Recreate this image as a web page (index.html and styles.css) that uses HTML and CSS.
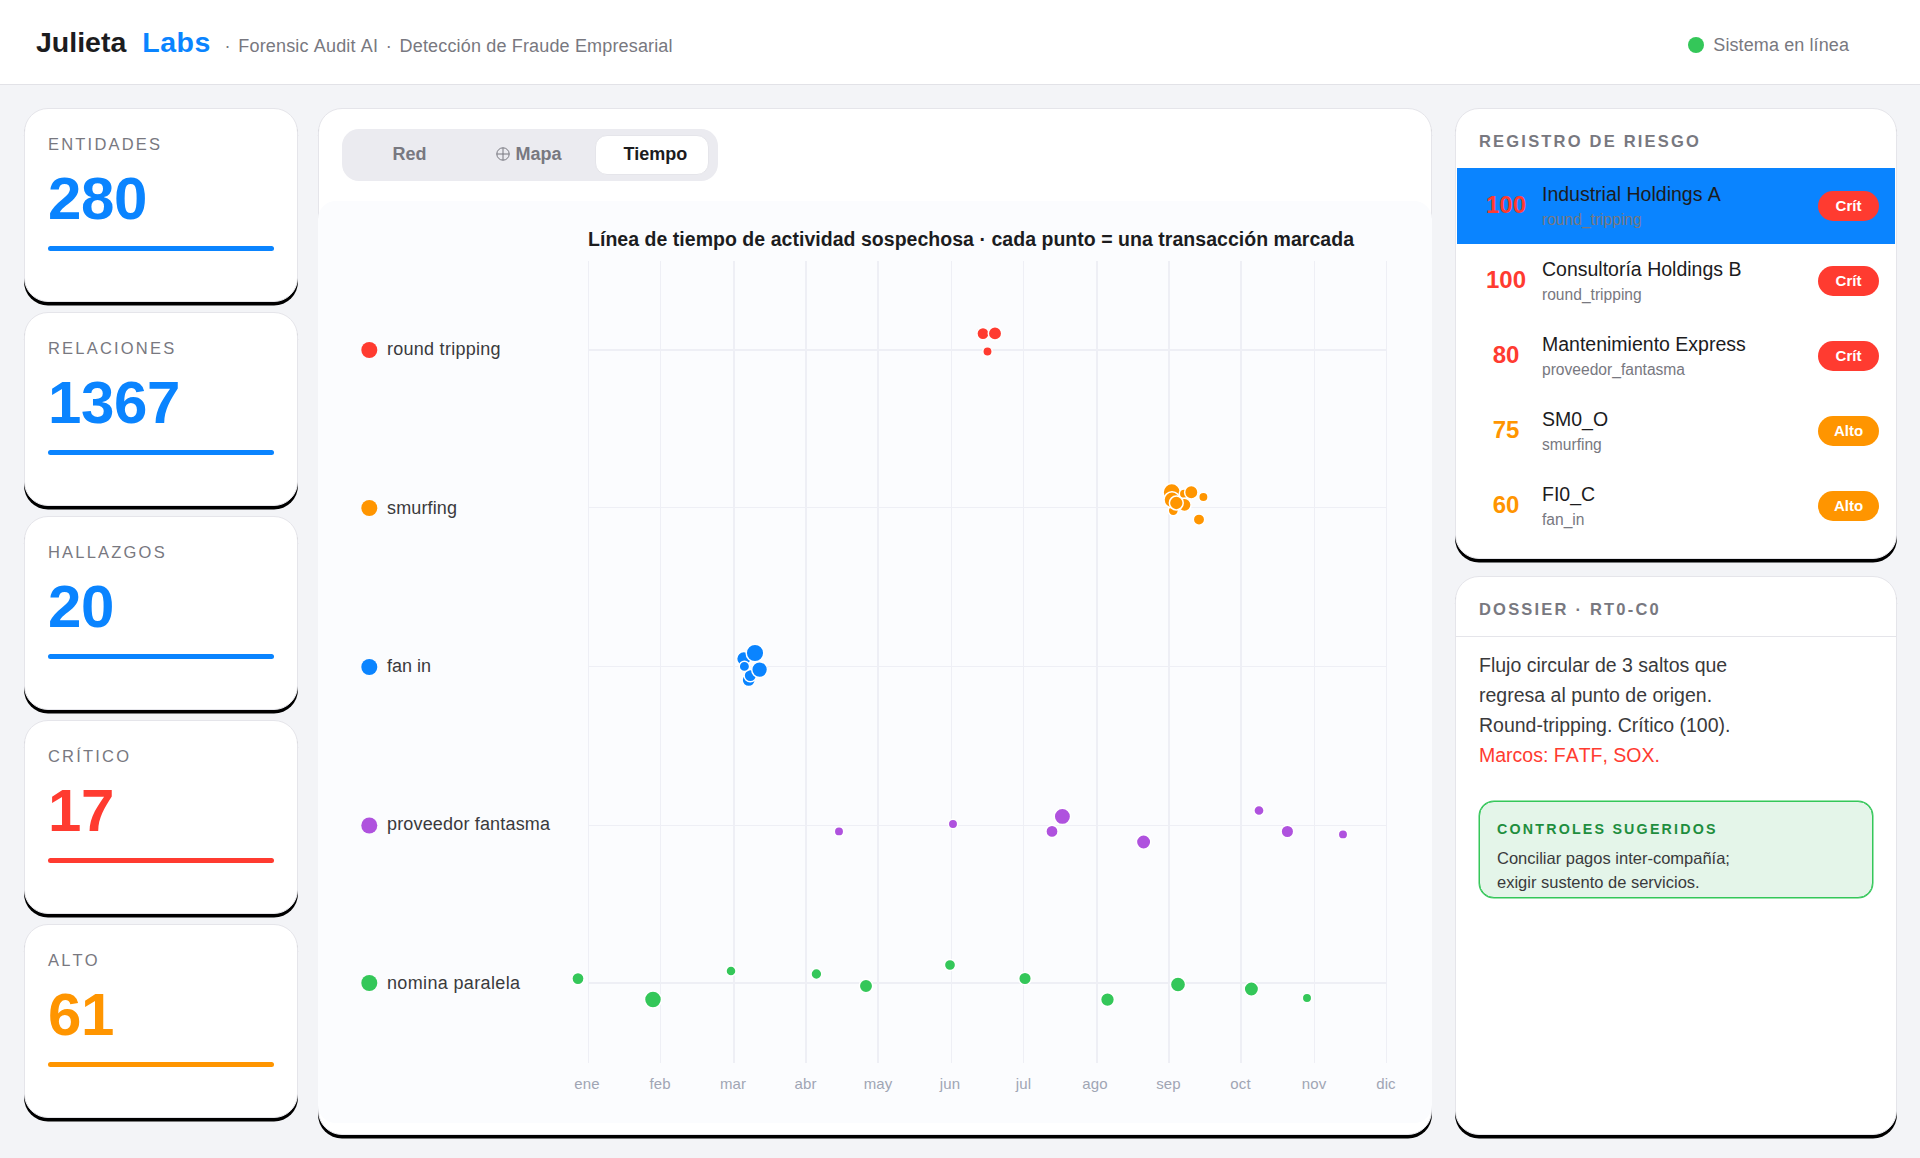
FILE: index.html
```html
<!DOCTYPE html>
<html lang="es">
<head>
    <meta charset="UTF-8">
    <meta name="viewport" content="width=device-width, initial-scale=1.0">
    <title>Julieta Labs</title>
    <link rel="stylesheet" href="styles.css">
</head>
<body>
    <!-- Header -->
    <header class="topbar">
        <div class="brand">
            <span class="brand-name">Julieta</span>
            <span class="brand-labs">Labs</span>
            <span class="brand-sub"><span class="sep">·</span>Forensic Audit AI<span class="sep">·</span>Detección de Fraude Empresarial</span>
        </div>
        <div class="status"><span class="status-dot"></span>Sistema en línea</div>
    </header>

    <main class="layout">
        <!-- Stats -->
        <section class="stats">
            <div class="card stat blue">
                <div class="stat-label">ENTIDADES</div>
                <div class="stat-value">280</div>
                <div class="stat-bar"></div>
            </div>
            <div class="card stat blue">
                <div class="stat-label">RELACIONES</div>
                <div class="stat-value">1367</div>
                <div class="stat-bar"></div>
            </div>
            <div class="card stat blue">
                <div class="stat-label">HALLAZGOS</div>
                <div class="stat-value">20</div>
                <div class="stat-bar"></div>
            </div>
            <div class="card stat red">
                <div class="stat-label">CRÍTICO</div>
                <div class="stat-value">17</div>
                <div class="stat-bar"></div>
            </div>
            <div class="card stat orange">
                <div class="stat-label">ALTO</div>
                <div class="stat-value">61</div>
                <div class="stat-bar"></div>
            </div>
        </section>

        <!-- Timeline -->
        <section class="card panel">
            <div class="tabs">
                <button class="tab tab-red">Red</button>
                <button class="tab tab-map">
                    <svg class="globe" viewBox="0 0 14 14"><circle cx="7" cy="7" r="6.2"/><path d="M7 .8v12.4M.8 7h12.4"/></svg>
                    Mapa
                </button>
                <button class="tab active">Tiempo</button>
            </div>
            <svg class="chart" viewBox="318 201 1114 922">
                <rect class="chart-bg" x="318" y="201" width="1114" height="922" rx="18"/>
                <text class="chart-title" x="588" y="246" textLength="766">Línea de tiempo de actividad sospechosa · cada punto = una transacción marcada</text>

                <!-- Months -->
                <path class="grid thin" d="M588.5 261v802M660.5 261v802M951.5 261v802M1023.5 261v802M1314.5 261v802M1386.5 261v802"/>
                <path class="grid" d="M734 261v802M806 261v802M878 261v802M1097 261v802M1169 261v802M1241 261v802"/>
                <g class="months">
                    <text x="587" y="1089">ene</text>
                    <text x="660" y="1089">feb</text>
                    <text x="733" y="1089">mar</text>
                    <text x="805.5" y="1089">abr</text>
                    <text x="878" y="1089">may</text>
                    <text x="950" y="1089">jun</text>
                    <text x="1023.5" y="1089">jul</text>
                    <text x="1095" y="1089">ago</text>
                    <text x="1168.5" y="1089">sep</text>
                    <text x="1240.5" y="1089">oct</text>
                    <text x="1314" y="1089">nov</text>
                    <text x="1386" y="1089">dic</text>
                </g>

                <!-- Lanes -->
                <path class="grid" d="M588 350H1387M588 983H1387"/>
                <path class="grid thin" d="M588 507.5H1387M588 666.5H1387M588 825.5H1387"/>
                <g class="lanes">
                    <circle class="c-red" cx="369.3" cy="350" r="8"/>
                    <text x="387" y="355" textLength="113.5">round tripping</text>
                    <circle class="c-orange" cx="369.3" cy="508" r="8"/>
                    <text x="387" y="514" textLength="70">smurfing</text>
                    <circle class="c-blue" cx="369.3" cy="667" r="8"/>
                    <text x="387" y="672">fan in</text>
                    <circle class="c-purple" cx="369.3" cy="825.5" r="8"/>
                    <text x="387" y="830" textLength="163">proveedor fantasma</text>
                    <circle class="c-green" cx="369.3" cy="983" r="8"/>
                    <text x="387" y="989" textLength="133">nomina paralela</text>
                </g>

                <!-- Transactions -->
                <g class="dots c-red">
                    <circle cx="983" cy="333.6" r="6.1"/>
                    <circle cx="995" cy="333.4" r="6.7"/>
                    <circle cx="987.5" cy="351.5" r="4.7"/>
                </g>
                <g class="dots c-orange">
                    <circle cx="1171.8" cy="492.3" r="8.7"/>
                    <circle cx="1184" cy="493.8" r="4.7"/>
                    <circle cx="1173.3" cy="510.6" r="5.1"/>
                    <circle cx="1184.5" cy="504.8" r="6.6"/>
                    <circle cx="1172" cy="499.8" r="8"/>
                    <circle cx="1191.3" cy="492.3" r="6.7"/>
                    <circle cx="1203.4" cy="497" r="4.7"/>
                    <circle cx="1199" cy="519.6" r="5.7"/>
                    <circle cx="1176.3" cy="503" r="6.9"/>
                </g>
                <g class="dots c-blue">
                    <circle cx="743.8" cy="658.7" r="7.2"/>
                    <circle cx="755" cy="653" r="8.8"/>
                    <circle cx="748.7" cy="680" r="6.6"/>
                    <circle cx="750.3" cy="675.6" r="6.2"/>
                    <circle cx="744.4" cy="666.4" r="5.2"/>
                    <circle cx="759.6" cy="669.6" r="7.9"/>
                </g>
                <g class="dots c-purple">
                    <circle cx="839" cy="831.4" r="4.7"/>
                    <circle cx="953" cy="824" r="4.7"/>
                    <circle cx="1062.4" cy="816.4" r="8.2"/>
                    <circle cx="1052" cy="831.4" r="6.1"/>
                    <circle cx="1143.6" cy="842" r="7.2"/>
                    <circle cx="1259" cy="810.5" r="5.1"/>
                    <circle cx="1287.4" cy="831.5" r="6.3"/>
                    <circle cx="1343" cy="834.4" r="4.7"/>
                </g>
                <g class="dots c-green">
                    <circle cx="578" cy="978.6" r="6.1"/>
                    <circle cx="653" cy="999.6" r="8.5"/>
                    <circle cx="731" cy="971" r="5"/>
                    <circle cx="816.4" cy="974" r="5.4"/>
                    <circle cx="866" cy="986" r="6.7"/>
                    <circle cx="950" cy="965" r="5.6"/>
                    <circle cx="1025" cy="978.5" r="6.3"/>
                    <circle cx="1107.5" cy="999.6" r="6.9"/>
                    <circle cx="1178" cy="984.5" r="7.6"/>
                    <circle cx="1251.4" cy="989" r="7.2"/>
                    <circle cx="1307" cy="998" r="4.7"/>
                </g>
            </svg>
        </section>

        <aside class="side">
            <!-- Risk register -->
            <section class="card register">
                <h2 class="side-title">REGISTRO DE RIESGO</h2>
                <div class="risk selected">
                    <span class="score crit">100</span>
                    <div class="risk-info">
                        <div class="risk-name">Industrial Holdings A</div>
                        <div class="risk-type">round_tripping</div>
                    </div>
                    <span class="pill crit">Crít</span>
                </div>
                <div class="risk">
                    <span class="score crit">100</span>
                    <div class="risk-info">
                        <div class="risk-name">Consultoría Holdings B</div>
                        <div class="risk-type">round_tripping</div>
                    </div>
                    <span class="pill crit">Crít</span>
                </div>
                <div class="risk">
                    <span class="score crit">80</span>
                    <div class="risk-info">
                        <div class="risk-name">Mantenimiento Express</div>
                        <div class="risk-type">proveedor_fantasma</div>
                    </div>
                    <span class="pill crit">Crít</span>
                </div>
                <div class="risk">
                    <span class="score high">75</span>
                    <div class="risk-info">
                        <div class="risk-name">SM0_O</div>
                        <div class="risk-type">smurfing</div>
                    </div>
                    <span class="pill high">Alto</span>
                </div>
                <div class="risk">
                    <span class="score high">60</span>
                    <div class="risk-info">
                        <div class="risk-name">FI0_C</div>
                        <div class="risk-type">fan_in</div>
                    </div>
                    <span class="pill high">Alto</span>
                </div>
            </section>

            <!-- Dossier -->
            <section class="card dossier">
                <h2 class="side-title">DOSSIER · RT0-C0</h2>
                <p class="dossier-text">
                    Flujo circular de 3 saltos que<br>
                    regresa al punto de origen.<br>
                    Round-tripping. Crítico (100).<br>
                    <span class="frameworks">Marcos: FATF, SOX.</span>
                </p>
                <div class="controls">
                    <h3 class="controls-title">CONTROLES SUGERIDOS</h3>
                    <p class="controls-text">Conciliar pagos inter-compañía;<br>exigir sustento de servicios.</p>
                </div>
            </section>
        </aside>
    </main>
</body>
</html>
```
FILE: styles.css
```css
* {
    box-sizing: border-box;
    margin: 0;
    padding: 0;
}

body {
    height: 1158px;
    background: #f3f4f7;
    font-family: "Liberation Sans", Arial, sans-serif;
    font-kerning: none;
    color: #1c1c1e;
    overflow: hidden;
}

/* Header */
.topbar {
    height: 85px;
    padding: 25px 71px 0 36px;
    display: flex;
    justify-content: space-between;
    background: #fff;
    border-bottom: 1px solid #e2e2e7;
}

.brand {
    display: flex;
    align-items: baseline;
    height: 34px;
    line-height: 34px;
}

.brand-name,
.brand-labs {
    font-size: 28.5px;
    font-weight: bold;
}

.brand-labs {
    margin-left: 16px;
    letter-spacing: 0.5px;
    color: #0a84ff;
}

.brand-sub {
    margin-left: 6px;
    font-size: 18px;
    letter-spacing: 0.16px;
    color: #787880;
}

.sep {
    display: inline-block;
    width: 21.5px;
    text-align: center;
}

.status {
    display: flex;
    align-items: center;
    gap: 9px;
    height: 20px;
    margin-top: 10px;
    font-size: 18px;
    letter-spacing: 0.1px;
    color: #787880;
}

.status-dot {
    width: 16px;
    height: 16px;
    border-radius: 50%;
    background: #34c759;
}

/* Layout */
.layout {
    display: grid;
    grid-template-columns: 274px 1114px 442px;
    padding: 23px 23px 23px 24px;
    justify-content: space-between;
    height: 1050px;
}

.stats {
    display: flex;
    flex-direction: column;
    gap: 10px;
}

.side {
    display: flex;
    flex-direction: column;
    gap: 17px;
}

.card {
    background: #fff;
    border: 1px solid #e5e5ea;
    border-radius: 24px;
    box-shadow: 0 3.5px 0 #000;
}

/* Stats */
.stat {
    height: 194px;
    padding: 25px 23px 0;
}

.stat-label {
    font-size: 16.5px;
    line-height: 20px;
    letter-spacing: 2.2px;
    color: #787880;
}

.stat-value {
    margin-top: 15px;
    font-size: 60px;
    line-height: 60px;
    letter-spacing: -0.4px;
    font-weight: bold;
}

.stat-bar {
    height: 5px;
    margin-top: 17px;
    border-radius: 2.5px;
    background: currentColor;
}

.blue { color: #0a84ff; }
.red { color: #ff3b30; }
.orange { color: #ff9500; }

/* Timeline panel */
.panel {
    height: 1027px;
    margin-left: -2px;
    width: 1114px;
    padding-top: 20px;
}

.tabs {
    display: flex;
    align-items: flex-start;
    width: 376px;
    height: 52px;
    margin-left: 23px;
    padding: 6px 9px 6px 10px;
    border-radius: 17px;
    background: #ebebf0;
}

.tab {
    display: flex;
    align-items: center;
    height: 40px;
    padding-bottom: 2px;
    border: 1px solid transparent;
    border-radius: 12px;
    background: none;
    font-family: inherit;
    font-size: 18px;
    font-weight: bold;
    color: #787880;
}

.tab-red {
    width: 143px;
    padding-left: 40px;
}

.tab-map {
    width: 100px;
    gap: 6px;
}

.tab.active {
    width: 114px;
    padding-left: 28px;
    background: #fff;
    border-color: #e5e5ea;
    color: #1c1c1e;
}

.globe {
    width: 14px;
    height: 14px;
    fill: none;
    stroke: #787880;
    stroke-width: 1;
}

.chart {
    display: block;
    width: 1114px;
    height: 922px;
    margin: 20px 0 0 -1px;
}

.chart-bg {
    fill: #fbfcfe;
}

.chart-title {
    font-size: 19.5px;
    font-weight: bold;
    fill: #1c1c1e;
}

.grid {
    stroke: #eeeff5;
    stroke-width: 2;
}

.grid.thin {
    stroke-width: 1;
}

.months text {
    font-size: 15px;
    letter-spacing: 0.1px;
    text-anchor: middle;
    fill: #a0a5b4;
}

.lanes text {
    font-size: 18px;
    fill: #3a3a3c;
}

.dots circle {
    stroke: #fff;
    stroke-width: 1.5;
}

.c-red { fill: #ff3b30; }
.c-orange { fill: #ff9500; }
.c-blue { fill: #0a84ff; }
.c-purple { fill: #af52de; }
.c-green { fill: #34c759; }

/* Side cards */
.side-title {
    padding-left: 23px;
    font-size: 16.5px;
    line-height: 20px;
    letter-spacing: 2.2px;
    color: #787880;
}

.register {
    height: 451px;
    padding-top: 22px;
}

.register .side-title {
    margin-bottom: 17px;
}

.risk {
    display: flex;
    align-items: center;
    height: 75px;
    padding: 0 17px 0 20px;
}

.risk.selected {
    height: 76px;
    margin: 0 1px -1px;
    padding: 0 16px 0 19px;
    background: #0a84ff;
}

.score {
    width: 60px;
    margin-top: -2px;
    text-align: center;
    font-size: 24px;
    font-weight: bold;
}

.score.crit { color: #ff3b30; }
.score.high { color: #ff9500; }

.risk-info {
    flex: 1;
    padding-left: 6px;
}

.risk-name {
    font-size: 19.5px;
    line-height: 26px;
}

.risk-type {
    margin-top: 2px;
    font-size: 15.6px;
    line-height: 22px;
    color: #787880;
}

.pill {
    width: 61px;
    height: 30px;
    border-radius: 15px;
    font-size: 15px;
    line-height: 29px;
    font-weight: bold;
    text-align: center;
    color: #fff;
}

.pill.crit { background: #ff3b30; }
.pill.high { background: #ff9500; }

/* Dossier */
.dossier {
    height: 559px;
    padding-top: 22px;
}

.dossier .side-title {
    padding-bottom: 17px;
    border-bottom: 1px solid #e5e5ea;
}

.dossier-text {
    padding: 13px 23px 0;
    font-size: 19.5px;
    line-height: 30px;
    color: #3a3a3c;
}

.frameworks {
    color: #ff3b30;
}

.controls {
    width: 394px;
    height: 97px;
    margin: 31px 0 0 23px;
    padding: 17px 17px 0;
    border: 1px solid #34c759;
    border-radius: 15px;
    background: #e4f5e9;
    box-shadow: 0 0 0 0.5px #34c759;
}

.controls-title {
    font-size: 14.25px;
    line-height: 20px;
    letter-spacing: 2.2px;
    color: #1e8e3e;
}

.controls-text {
    margin-top: 7px;
    font-size: 16.5px;
    line-height: 24px;
    color: #3a3a3c;
}
```
